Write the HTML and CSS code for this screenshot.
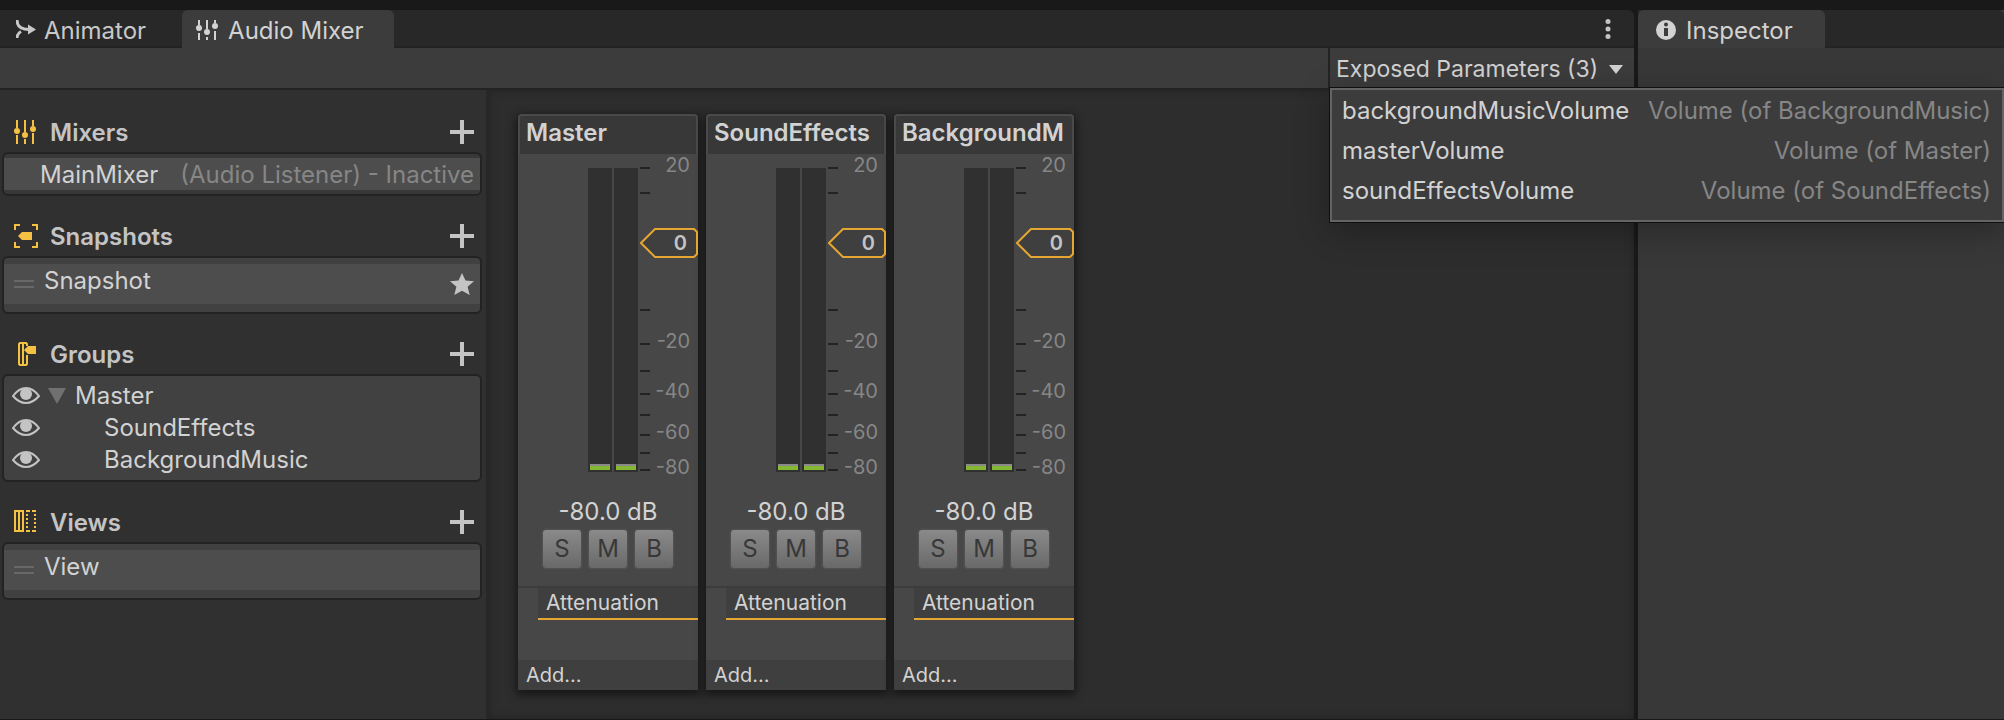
FILE: index.html
```html
<!DOCTYPE html>
<html lang="en">
<head>
<meta charset="utf-8">
<title>Audio Mixer</title>
<link rel="stylesheet" href="styles.css">
</head>
<body>
<svg class="defs" aria-hidden="true">
  <symbol id="mixer" viewBox="0 0 24 24">
    <path d="M3 0v8M3 15v9M11 0v12M11 19v5M19 0v6M19 13v11" stroke="currentColor" stroke-width="2" fill="none"/>
    <circle cx="3" cy="11" r="3" fill="currentColor"/><circle cx="11" cy="15" r="3" fill="currentColor"/><circle cx="19" cy="9" r="3" fill="currentColor"/>
  </symbol>
  <symbol id="plus" viewBox="0 0 24 24"><path d="M12 0v24M0 12h24" stroke="currentColor" stroke-width="4"/></symbol>
  <symbol id="eye" viewBox="0 0 28 18">
    <path d="M1 9Q7 1 14 1T27 9Q21 16 14 16T1 9Z" fill="none" stroke="currentColor" stroke-width="2"/>
    <circle cx="14" cy="7" r="6" fill="currentColor"/>
  </symbol>
  <symbol id="grip" viewBox="0 0 20 8"><path d="M0 1h20M0 7h20" stroke="currentColor" stroke-width="2"/></symbol>
  <symbol id="ticks" viewBox="0 0 10 306">
    <path d="M0 2h10M0 27h10M0 144h10M0 178h10M0 205h10M0 228h10M0 249h10M0 269h10M0 287h10M0 304h10" stroke="#232323" stroke-width="2"/>
  </symbol>
  <symbol id="knob" viewBox="0 0 58 30">
    <path d="M1 15L15 1H54L57 4V26L54 29H15Z" fill="#3f3f3f" stroke="#e5a632" stroke-width="2"/>
  </symbol>
</svg>

<div class="editor">
  <main class="dock dock-main">
    <header class="tabs">
      <button class="tab" type="button">
        <svg class="icon-20" viewBox="0 0 20 20"><path d="M1 0C1 6 5 9.500 13 9.500M1 18C1 15 2.500 13 5 11.500" fill="none" stroke="currentColor" stroke-width="3"/><path d="M12 4.500L20 9.500L12 14.500Z" fill="currentColor"/></svg>
        Animator
      </button>
      <button class="tab tab-active tab-mixer" type="button">
        <svg class="icon-tab-mixer" viewBox="0 0 22 20"><path d="M3 0V5M3 13V20M11 0V9M11 17V20M19 0V3M19 11V20" stroke="currentColor" stroke-width="2"/><g fill="currentColor"><circle cx="3" cy="8" r="3"/><circle cx="11" cy="12" r="3"/><circle cx="19" cy="6" r="3"/></g></svg>
        Audio Mixer
      </button>
      <button class="menu" type="button" aria-label="Window menu">
        <svg class="icon-20" viewBox="0 0 20 20"><g fill="currentColor"><circle cx="10" cy="2.500" r="2.500"/><circle cx="10" cy="10" r="2.500"/><circle cx="10" cy="17.500" r="2.500"/></g></svg>
      </button>
    </header>

    <div class="toolbar">
      <div class="exposed">
        <button class="exposed-button" type="button" aria-expanded="true">
          Exposed Parameters (3)
          <svg class="caret" viewBox="0 0 14 9"><path d="M0 0H14L7 9Z" fill="currentColor"/></svg>
        </button>
        <ul class="popup">
          <li><span>backgroundMusicVolume</span><span class="dim">Volume (of BackgroundMusic)</span></li>
          <li><span>masterVolume</span><span class="dim">Volume (of Master)</span></li>
          <li><span>soundEffectsVolume</span><span class="dim">Volume (of SoundEffects)</span></li>
        </ul>
      </div>
    </div>

    <div class="workspace">
      <aside class="side">
        <section>
          <header class="section-head">
            <svg class="section-icon"><use href="#mixer"/></svg>
            <h2>Mixers</h2>
            <button class="add" type="button" aria-label="Add mixer"><svg class="icon-24"><use href="#plus"/></svg></button>
          </header>
          <div class="box box-mixers">
            <div class="row row-mixer"><span>MainMixer</span><span class="dim">(Audio Listener) - Inactive</span></div>
          </div>
        </section>

        <section>
          <header class="section-head">
            <svg class="section-icon" viewBox="0 0 24 24"><path d="M1 6V1H6M18 1H23V6M23 18V23H18M6 23H1V18" fill="none" stroke="currentColor" stroke-width="2"/><path d="M4 12L8 8H18V16H8Z" fill="currentColor"/></svg>
            <h2>Snapshots</h2>
            <button class="add" type="button" aria-label="Add snapshot"><svg class="icon-24"><use href="#plus"/></svg></button>
          </header>
          <div class="box box-list">
            <div class="row row-item">
              <svg class="grip"><use href="#grip"/></svg><span>Snapshot</span>
              <svg class="star" viewBox="0 0 24 24"><path d="M12 1L15.500 8.500L24 9.300L17.600 14.700L19.700 23L12 18.700L4.300 23L6.400 14.700L0 9.300L8.500 8.500Z" fill="currentColor"/></svg>
            </div>
          </div>
        </section>

        <section>
          <header class="section-head">
            <svg class="section-icon" viewBox="0 0 24 24"><path d="M13 4V2L12 1H6L5 2V22L6 23H12L13 22V13M9 1V23" fill="none" stroke="currentColor" stroke-width="2"/><path d="M10 8L14 4H22V12H14Z" fill="currentColor"/></svg>
            <h2>Groups</h2>
            <button class="add" type="button" aria-label="Add group"><svg class="icon-24"><use href="#plus"/></svg></button>
          </header>
          <ul class="box box-groups">
            <li><svg class="eye"><use href="#eye"/></svg><svg class="fold" viewBox="0 0 18 16"><path d="M0 0H18L9 16Z" fill="currentColor"/></svg>Master</li>
            <li class="child"><svg class="eye"><use href="#eye"/></svg>SoundEffects</li>
            <li class="child"><svg class="eye"><use href="#eye"/></svg>BackgroundMusic</li>
          </ul>
        </section>

        <section>
          <header class="section-head">
            <svg class="section-icon" viewBox="0 0 24 24"><path d="M1 1H9V21H1ZM5 1V21" fill="none" stroke="currentColor" stroke-width="2"/><path d="M13 22V0M21 22V0" fill="none" stroke="currentColor" stroke-width="2" stroke-dasharray="2 2"/><path d="M12 1H16M18 1H22M12 21H16M18 21H22" stroke="currentColor" stroke-width="2"/></svg>
            <h2>Views</h2>
            <button class="add" type="button" aria-label="Add view"><svg class="icon-24"><use href="#plus"/></svg></button>
          </header>
          <div class="box box-list">
            <div class="row row-item"><svg class="grip"><use href="#grip"/></svg><span>View</span></div>
          </div>
        </section>
      </aside>

      <div class="strips">
        <article class="strip">
          <h3>Master</h3>
          <div class="fader">
            <div class="meter"><i></i><i></i></div>
            <svg class="ticks"><use href="#ticks"/></svg>
            <div class="scale"><span>20</span><span>-20</span><span>-40</span><span>-60</span><span>-80</span></div>
            <input class="range" type="range" min="-80" max="20" value="0" aria-label="Master volume">
            <div class="knob"><svg><use href="#knob"/></svg><b>0</b></div>
          </div>
          <p class="level">-80.0 dB</p>
          <div class="modes"><button type="button">S</button><button type="button">M</button><button type="button">B</button></div>
          <div class="effects"><button class="effect" type="button">Attenuation</button></div>
          <button class="add-effect" type="button">Add...</button>
        </article>

        <article class="strip">
          <h3>SoundEffects</h3>
          <div class="fader">
            <div class="meter"><i></i><i></i></div>
            <svg class="ticks"><use href="#ticks"/></svg>
            <div class="scale"><span>20</span><span>-20</span><span>-40</span><span>-60</span><span>-80</span></div>
            <input class="range" type="range" min="-80" max="20" value="0" aria-label="SoundEffects volume">
            <div class="knob"><svg><use href="#knob"/></svg><b>0</b></div>
          </div>
          <p class="level">-80.0 dB</p>
          <div class="modes"><button type="button">S</button><button type="button">M</button><button type="button">B</button></div>
          <div class="effects"><button class="effect" type="button">Attenuation</button></div>
          <button class="add-effect" type="button">Add...</button>
        </article>

        <article class="strip">
          <h3>BackgroundM</h3>
          <div class="fader">
            <div class="meter"><i></i><i></i></div>
            <svg class="ticks"><use href="#ticks"/></svg>
            <div class="scale"><span>20</span><span>-20</span><span>-40</span><span>-60</span><span>-80</span></div>
            <input class="range" type="range" min="-80" max="20" value="0" aria-label="BackgroundMusic volume">
            <div class="knob"><svg><use href="#knob"/></svg><b>0</b></div>
          </div>
          <p class="level">-80.0 dB</p>
          <div class="modes"><button type="button">S</button><button type="button">M</button><button type="button">B</button></div>
          <div class="effects"><button class="effect" type="button">Attenuation</button></div>
          <button class="add-effect" type="button">Add...</button>
        </article>
      </div>
    </div>
  </main>

  <aside class="dock dock-inspector">
    <header class="tabs">
      <button class="tab tab-active tab-inspector" type="button">
        <svg class="icon-20" viewBox="0 0 20 20"><circle cx="10" cy="10" r="10" fill="currentColor"/><circle cx="10" cy="4.500" r="2" fill="#3c3c3c"/><path d="M8 8H12V16H8Z" fill="#3c3c3c"/></svg>
        Inspector
      </button>
    </header>
  </aside>
</div>
</body>
</html>
```

FILE: styles.css
```css
* { box-sizing: border-box; }

body {
  margin: 0;
  background: #191919;
  color: #d2d2d2;
  font: 24px/32px Inter, "Liberation Sans", sans-serif;
}

button {
  margin: 0;
  padding: 0;
  border: 0;
  background: none;
  color: inherit;
  font: inherit;
}

ul { margin: 0; padding: 0; list-style: none; }
h2, h3, p { margin: 0; }
svg { display: block; flex: none; }

.defs { position: absolute; width: 0; height: 0; }
.icon-20 { width: 20px; height: 20px; }
.icon-24 { width: 24px; height: 24px; }
.dim { color: #868686; }

.editor {
  display: flex;
  gap: 4px;
  min-height: 100vh;
  padding: 10px 0 1px;
}

.dock { display: flex; flex-direction: column; }
.dock-main { flex: 1; min-width: 0; }
.dock-inspector { width: 366px; background: #383838; }

/* Tabs */
.tabs {
  display: flex;
  height: 38px;
  background: #282828;
  border-radius: 0 6px 0 0;
  box-shadow: inset 0 -2px #232323;
}

.tab {
  display: flex;
  align-items: center;
  gap: 8px;
  padding: 4px 36px 0 16px;
  color: #c8c8c8;
}
.tab svg { margin-bottom: 2px; }
.tab-active { background: #3c3c3c; border-radius: 6px 6px 0 0; color: #d2d2d2; }
.tab-mixer { padding-left: 14px; padding-right: 30px; gap: 10px; }
.tab-inspector { padding-left: 18px; padding-right: 32px; gap: 10px; }
.icon-tab-mixer { width: 22px; height: 20px; }

.menu { margin-left: auto; padding: 0 16px; color: #c4c4c4; }

/* Toolbar */
.toolbar {
  display: flex;
  justify-content: flex-end;
  height: 42px;
  padding-right: 2px;
  background: #3c3c3c;
  border-bottom: 2px solid #232323;
}

.exposed { position: relative; width: 304px; border-left: 2px solid #232323; }
.exposed-button {
  display: flex;
  align-items: center;
  justify-content: space-between;
  width: 100%;
  height: 40px;
  padding: 2px 9px 0 6px;
  font-size: 23px;
  white-space: nowrap;
}
.caret { width: 14px; height: 9px; }

.popup {
  position: absolute;
  z-index: 2;
  top: 40px;
  left: 0;
  width: 674px;
  padding: 1px 11px 9px 10px;
  background: #3c3c3c;
  border: 2px solid #646464;
  outline: 1px solid #101010;
  box-shadow: 0 8px 32px rgba(0, 0, 0, 0.3);
}
.popup li { display: flex; justify-content: space-between; line-height: 40px; white-space: nowrap; }

/* Left column */
.workspace { display: flex; flex: 1; background: #2d2d2d; }

.side {
  display: flex;
  flex-direction: column;
  gap: 21px;
  width: 488px;
  padding: 23px 4px 0 2px;
  background: #303030;
  border-right: 2px solid #272727;
}

.section-head {
  display: flex;
  align-items: center;
  height: 39px;
  padding: 0 8px 1px 12px;
}
.section-icon { width: 24px; height: 24px; margin-right: 12px; color: #f5c142; }
h2 { padding-top: 2px; color: #c4c4c4; font-size: 24px; font-weight: 600; }
.add { margin-left: auto; color: #c4c4c4; }

.box { background: #414141; border: 2px solid #232323; border-radius: 6px; }
.box-mixers { padding: 4px 0; background: #383838; }
.box-list { padding: 6px 0 8px; }
.row { display: flex; background: #4d4d4d; }
.row span { padding-top: 1px; }
.row-mixer { height: 32px; gap: 22px; padding: 0 10px 0 36px; white-space: nowrap; }
.row-item { height: 40px; padding: 0 6px 0 10px; }
.grip { width: 20px; height: 8px; margin: 16px 10px 0 0; color: #686868; }
.star { width: 24px; height: 24px; margin: 8px 0 0 auto; color: #c4c4c4; }

.box-groups { padding: 4px 0 4px 8px; }
.box-groups li { display: flex; align-items: center; }
.box-groups .child { gap: 64px; }
.eye { width: 28px; height: 18px; color: #c4c4c4; }
.fold { width: 18px; height: 16px; margin: 0 9px 0 8px; color: #707070; }

/* Channel strips */
.strips {
  display: flex;
  flex: 1;
  align-items: flex-start;
  gap: 8px;
  padding: 24px 30px;
  box-shadow: inset 0 0 10px rgba(0, 0, 0, 0.25);
}

.strip {
  width: 180px;
  overflow: hidden;
  background: #474747;
  border-radius: 4px 4px 0 0;
  box-shadow: 0 3px 8px 2px rgba(0, 0, 0, 0.5);
}

h3 {
  height: 40px;
  padding: 1px 6px 0;
  overflow: hidden;
  background: #383838;
  border: 2px solid #4a4a4a;
  border-bottom: 0;
  border-radius: 4px 4px 0 0;
  font-size: 24px;
  font-weight: 600;
  white-space: nowrap;
}

.fader {
  position: relative;
  display: grid;
  grid-template-columns: 50px 10px 38px;
  column-gap: 2px;
  justify-content: end;
  padding: 1px 8px 0 0;
}
.meter { display: flex; gap: 2px; height: 304px; margin-top: 13px; }
.meter i {
  display: flex;
  flex: 1;
  align-items: flex-end;
  padding: 0 2px 2px;
  background: #303030;
}
.meter i::after { content: ""; width: 100%; height: 4px; background: #84b832; border-top: 2px solid #8a8a8a; }
.ticks { width: 10px; height: 306px; margin-top: 11px; }
.scale {
  display: grid;
  grid-template-rows: 176px 50px 41px 35px 20px;
  color: #868686;
  font-size: 20px;
  line-height: 20px;
  text-align: right;
}

.range {
  position: absolute;
  top: 14px;
  right: 0;
  width: 58px;
  height: 304px;
  margin: 0;
  appearance: none;
  background: transparent;
  writing-mode: vertical-lr;
  direction: rtl;
}
.range::-webkit-slider-thumb { appearance: none; width: 58px; height: 30px; background: transparent; }

.knob {
  position: absolute;
  top: 74px;
  right: 0;
  display: grid;
  align-items: center;
  pointer-events: none;
}
.knob > * { grid-area: 1 / 1; }
.knob svg { width: 58px; height: 30px; }
.knob b { padding-right: 11px; color: #c4c4c4; font-size: 20px; font-weight: 600; line-height: 20px; text-align: right; }

.level { margin-top: 19px; text-align: center; }

.modes { display: flex; justify-content: center; gap: 8px; margin: 2px 0 18px; }
.modes button {
  width: 38px;
  height: 38px;
  background: linear-gradient(#8a8a8a, #696969);
  border-radius: 3px;
  box-shadow: 0 0 2px 1px #555;
  color: #383838;
}

.effects { height: 74px; padding-left: 20px; border-top: 2px solid #3c3c3c; }
.effect, .add-effect {
  display: block;
  width: 100%;
  background: #3f3f3f;
  font-size: 20px;
  line-height: 30px;
  text-align: left;
}
.effect { padding-left: 8px; border-bottom: 2px solid #e5a632; font-size: 21px; }
.add-effect { padding-left: 8px; }
```
